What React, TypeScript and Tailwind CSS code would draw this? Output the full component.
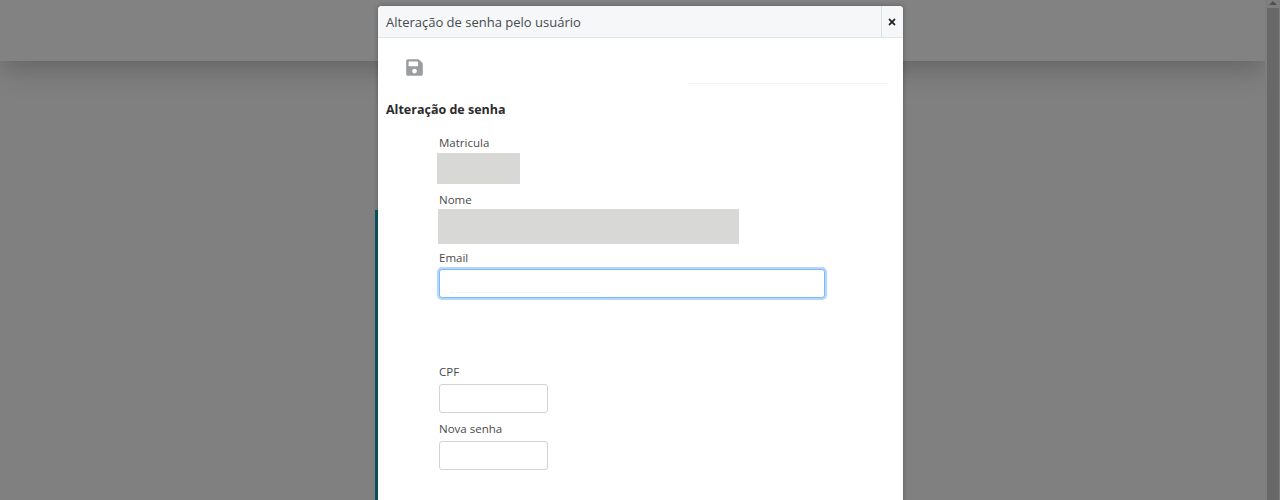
import { FaSave, FaTimes } from "react-icons/fa";

function Field({ label, children }: { label: string; children: React.ReactNode }) {
  return (
    <div>
      <label className="block pl-[2px] text-[11.5px] leading-[16px] text-[#4a4a4a]">{label}</label>
      {children}
    </div>
  );
}

export default function App() {
  return (
    <div className="relative flex h-[500px] w-[1280px] overflow-hidden bg-[#808080] font-['Open_Sans',sans-serif]">
      {/* page behind the overlay */}
      <div className="flex min-w-0 flex-1 flex-col">
        <div className="h-[61px] shrink-0 bg-[#828282] shadow-[0_6px_30px_rgba(0,0,0,0.25)]" />
        <div className="flex-1 pl-[375px] pt-[149px]">
          <div className="h-full w-[3px] bg-[#0b5560]" />
        </div>
      </div>
      {/* scrollbar */}
      <div className="flex w-[15px] shrink-0 flex-col items-center bg-[#7e7e7e]">
        <div className="mt-[1px] h-0 w-0 border-x-[4px] border-b-[4px] border-x-transparent border-b-[#505050]" />
        <div className="mt-[3px] h-full w-[12px] bg-[#686868]" />
      </div>

      {/* modal */}
      <div className="absolute left-[378px] top-[6px] h-[510px] w-[525px] rounded-t-[4px] bg-white shadow-[0_0_5px_rgba(0,0,0,0.3)]">
        <div className="flex h-[32px] items-stretch rounded-t-[4px] border-b border-[#e3e5e8] bg-[#f6f7f9]">
          <div className="flex flex-1 items-center pl-[8px] pt-[2px] text-[13px] text-[#454a4e]">
            Alteração de senha pelo usuário
          </div>
          <div className="flex w-[22px] items-center justify-center border-l border-[#dcdfe2] pr-[1px] text-[#222]">
            <FaTimes className="text-[10px]" />
          </div>
        </div>

        <div className="flex h-[46px] items-end justify-between pl-[27px] pr-[15px]">
          <FaSave className="mb-[7px] text-[19px] text-[#9a9da0]" />
          <div className="h-px w-[200px] bg-[#f5f5f5]" />
        </div>

        <h2 className="mt-[17px] pl-[8px] text-[12.5px] font-bold leading-[18px] text-[#2b2b2b]">Alteração de senha</h2>

        <div className="mt-[16px] flex flex-col pl-[59px]">
          <Field label="Matricula">
            <div className="mt-[2px] h-[31px] w-[83px] bg-[#d8d8d6] blur-[0.5px]" />
          </Field>
          <div className="mt-[8px]">
            <Field label="Nome">
              <div className="ml-[1px] mt-[1px] h-[35px] w-[301px] bg-[#d8d8d6] blur-[0.5px]" />
            </Field>
          </div>
          <div className="mt-[6px] pl-[2px]">
            <label className="block text-[11.5px] leading-[16px] text-[#4a4a4a]">Email</label>
            <div className="relative mt-[3px] w-[386px]">
              <input className="block h-[29px] w-full rounded-[3px] border border-[#7db9f6] bg-white shadow-[0_0_0_2px_#b4d8fb] outline-none" />
              <div className="absolute left-[11px] top-[23px] h-px w-[150px] bg-[#eef6fd]" />
            </div>
          </div>
          <div className="mt-[66px] pl-[2px]">
            <label className="block text-[11.5px] leading-[16px] text-[#4a4a4a]">CPF</label>
            <input className="mt-[4px] block h-[29px] w-[109px] rounded-[3px] border border-[#ced4da] bg-white outline-none" />
          </div>
          <div className="mt-[8px] pl-[2px]">
            <label className="block text-[11.5px] leading-[16px] text-[#4a4a4a]">Nova senha</label>
            <input className="mt-[4px] block h-[29px] w-[109px] rounded-[3px] border border-[#ced4da] bg-white outline-none" />
          </div>
        </div>
      </div>
    </div>
  );
}
